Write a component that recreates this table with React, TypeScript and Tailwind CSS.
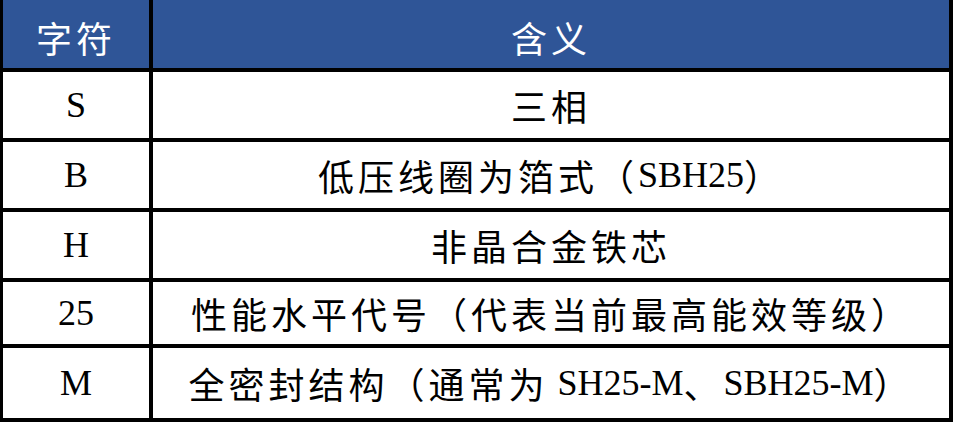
import React from "react";

const CJK = /[\u3000-\u303f\u3400-\u9fff\uff00-\uffef]/;

function Rich({ text }: { text: string }) {
  const runs: { cjk: boolean; s: string }[] = [];
  for (const ch of text) {
    const c = CJK.test(ch);
    const last = runs[runs.length - 1];
    if (last && last.cjk === c) last.s += ch;
    else runs.push({ cjk: c, s: ch });
  }
  return (
    <>
      {runs.map((r, i) =>
        r.cjk ? (
          <span
            key={i}
            className="text-[36px] tracking-[4px] [font-family:'Noto_Sans_CJK_SC',sans-serif]"
          >
            {r.s}
          </span>
        ) : (
          <span key={i} className="text-[36px] whitespace-pre">
            {r.s}
          </span>
        )
      )}
    </>
  );
}

const rows: { k: string; v: string; h: string }[] = [
  { k: "S", v: "三相", h: "h-[70px]" },
  { k: "B", v: "低压线圈为箔式（SBH25）", h: "h-[70px]" },
  { k: "H", v: "非晶合金铁芯", h: "h-[70px]" },
  { k: "25", v: "性能水平代号（代表当前最高能效等级）", h: "h-[66px]" },
  { k: "M", v: "全密封结构（通常为 SH25-M、SBH25-M）", h: "h-[74px]" },
];

export default function App() {
  return (
    <div className="w-[954px] h-[425px] bg-white [font-family:'Liberation_Serif','Noto_Sans_CJK_SC',serif] text-black">
      <div className="w-[953px] border-l-[3px] border-r-[4px] border-b-[4px] border-black">
        <div className="flex h-[68px] bg-[#2F5597] text-white">
          <div className="w-[150px] shrink-0 border-r-[4px] border-black flex items-center justify-center leading-none pt-[6px]">
            <Rich text="字符" />
          </div>
          <div className="flex-1 flex items-center justify-center leading-none pt-[6px]">
            <Rich text="含义" />
          </div>
        </div>
        {rows.map((r) => (
          <div key={r.k} className={`flex border-t-[4px] border-black ${r.h}`}>
            <div className="w-[150px] shrink-0 border-r-[4px] border-black flex items-center justify-center leading-none">
              <Rich text={r.k} />
            </div>
            <div className="flex-1 flex items-center justify-center leading-none">
              <Rich text={r.v} />
            </div>
          </div>
        ))}
      </div>
    </div>
  );
}
